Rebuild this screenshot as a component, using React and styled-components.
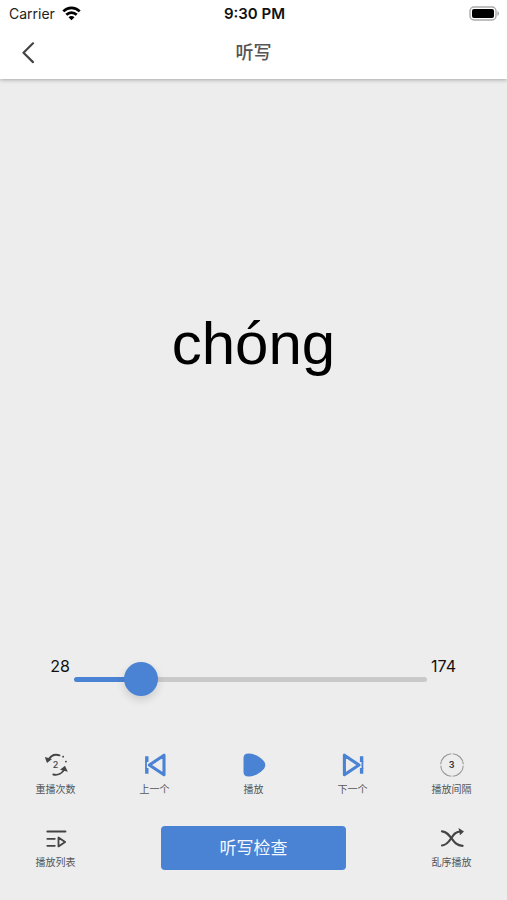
import React, { useState } from "react";
import styled, { createGlobalStyle } from "styled-components";

const GlobalStyle = createGlobalStyle`
*, *::before, *::after {
    box-sizing: border-box;
}
body {
    margin: 0;
    background: #ededed;
    color: #111;
    font-family: Inter, "Noto Sans CJK SC", sans-serif;
}
button {
    font-family: inherit;
    border: none;
    padding: 0;
    cursor: pointer;
}
svg {
    display: block;
}
`;

const Screen = styled.div`
    min-height: 100vh;
    display: flex;
    flex-direction: column;
`

const Header = styled.header`
    background: white;
    box-shadow: 0 1px 4px rgba(0, 0, 0, .3);
`

const StatusBar = styled.div`
    display: grid;
    grid-template-columns: 1fr auto 1fr;
    align-items: center;
    height: 27px;
    padding: 0 7px 0 9px;
    font-size: 14px;
    line-height: 20px;
`

const Carrier = styled.div`
    display: flex;
    align-items: center;
    gap: 7px;
    color: #222;
`

const Clock = styled.div`
    font-size: 15px;
    font-weight: 600;
    color: #111;
`

const Battery = styled.div`
    justify-self: end;
`

const NavBar = styled.nav`
    display: grid;
    grid-template-columns: 56px 1fr 56px;
    align-items: center;
    height: 52px;
`

const BackButton = styled.button`
    display: flex;
    align-items: center;
    justify-content: center;
    height: 52px;
    background: none;
    color: #444;
`

const Title = styled.h1`
    margin: 0;
    text-align: center;
    font-size: 18px;
    line-height: 28px;
    font-weight: 500;
    color: #555;
`

const WordArea = styled.main`
    flex: 1;
    display: flex;
    align-items: center;
    justify-content: center;
    padding-bottom: 48px;
`

const Word = styled.div`
    font-family: "Liberation Sans", Arial, sans-serif;
    font-size: 60px;
    line-height: 72px;
    color: #000;
`

const Progress = styled.div`
    display: grid;
    grid-template-columns: 70px 1fr 76px;
    column-gap: 4px;
    height: 44px;
    margin-bottom: 52px;
`

const Count = styled.label`
    font-size: 16px;
    line-height: 20px;
    text-align: ${props => props.$align};
`

const Range = styled.input`
    appearance: none;
    width: 100%;
    height: 34px;
    margin: 6px 0 0;
    background: none;
    cursor: pointer;

    &::-webkit-slider-runnable-track {
        height: 5px;
        border-radius: 3px;
        background: linear-gradient(to right, #4a83d4 var(--fill), #c9c9c9 var(--fill));
    }
    &::-webkit-slider-thumb {
        appearance: none;
        width: 34px;
        height: 34px;
        margin-top: -15px;
        border-radius: 50%;
        background: #4a83d4;
        box-shadow: 0 4px 8px rgba(0, 0, 0, .14);
    }
`

const Controls = styled.div`
    display: grid;
    grid-template-columns: repeat(5, 1fr);
    row-gap: 28px;
    padding: 0 6px 30px;
`

const Control = styled.button`
    display: flex;
    flex-direction: column;
    align-items: center;
    gap: 3px;
    background: none;
    font-size: 10px;
    line-height: 16px;
    color: #555;

    svg {
        width: 26px;
        height: 26px;
        color: ${props => props.$primary ? "#4a83d4" : "#444"};
    }
`

const CheckCell = styled.div`
    grid-column: span 3;
    display: flex;
    justify-content: center;
    align-items: center;
`

const CheckButton = styled.button`
    width: 62%;
    height: 44px;
    border-radius: 4px;
    background: #4a83d4;
    color: #f4f8ff;
    font-size: 17px;
    line-height: 24px;
`

const WifiIcon = () => (
    <svg width="19" height="15" viewBox="0 0 19 15" fill="none" stroke="#000" strokeWidth="2.7">
        <path d="M1.3 5.4C6 .7 13 .7 17.7 5.4" />
        <path d="M4.3 8.8c3-2.9 7.4-2.9 10.4 0" />
        <path d="M9.500 14.2L6.5 11.2c1.700-1.500 4.300-1.500 6 0z" fill="#000" stroke="none" />
    </svg>
)

const BatteryIcon = () => (
    <svg width="31" height="15" viewBox="0 0 31 15">
        <rect x="1" y="1" width="26" height="13" rx="4" fill="#fff" stroke="#aaa" strokeWidth="1.4" />
        <rect x="3" y="3" width="22" height="9" rx="2" fill="#000" />
        <path d="M28.4 5.2c2.2.6 2.2 4 0 4.6z" fill="#aaa" />
    </svg>
)

const BackIcon = () => (
    <svg width="14" height="22" viewBox="0 0 14 22" fill="none" stroke="currentColor" strokeWidth="2.2" strokeLinecap="round" strokeLinejoin="round">
        <path d="M12 1.3L2.5 10.7 12 20.1" />
    </svg>
)

const RepeatIcon = () => (
    <svg viewBox="0 0 26 26" fill="none" stroke="currentColor" strokeWidth="1.8" strokeLinecap="round">
        <path d="M16.6 3.3C11.8 1.9 7.6 3.8 5.3 8" />
        <path d="M1.8 5l7.200 2-5 4z" fill="currentColor" stroke="none" />
        <path d="M10.3 22.5c4.8 1 9.3-1.1 11-5.3" />
        <path d="M17 17.8l5-4 2.800 6z" fill="currentColor" stroke="none" />
        <path d="M20.1 4.7h.1M22.9 9.6h.1" />
        <text x="12.6" y="16" textAnchor="middle" fontSize="9" fontWeight="500" fill="currentColor" stroke="none">2</text>
    </svg>
)

const PreviousIcon = () => (
    <svg viewBox="0 0 26 26" fill="none" stroke="currentColor" strokeWidth="3.1" strokeLinejoin="round">
        <path d="M22 3.2v19.6L7.4 13z" />
        <path d="M4.800 4.200v5.800M4.800 16v5.800" strokeWidth="3.4" />
        <path d="M4 9v8" strokeWidth="1.8" />
    </svg>
)

const PlayIcon = () => (
    <svg viewBox="0 0 26 26" fill="currentColor">
        <path d="M2.500 6C2.500 2.600 4.500 1.400 8.500 1.600c5 .3 10.500 3.200 14 7.200 2.400 2.800 2.400 5.600 0 8.400-3.500 4-9 6.900-14 7.200-4 .2-6-1-6-4.400z" />
    </svg>
)

const NextIcon = () => (
    <svg viewBox="0 0 26 26" fill="none" stroke="currentColor" strokeWidth="3.1" strokeLinejoin="round">
        <path d="M4.400 3.200v19.600L19 13z" />
        <path d="M21.600 4.200v5.800M21.600 16v5.800" strokeWidth="3.4" />
        <path d="M22.400 9v8" strokeWidth="1.8" />
    </svg>
)

const IntervalIcon = () => (
    <svg viewBox="0 0 26 26" fill="none" stroke="#999" strokeWidth="1.1">
        <circle cx="13" cy="13" r="11.3" pathLength="100" strokeDasharray="23 2" strokeDashoffset="-1" />
        <text x="12.6" y="16" textAnchor="middle" fontSize="9" fontWeight="600" fill="#333" stroke="none">3</text>
    </svg>
)

const ListIcon = () => (
    <svg viewBox="0 0 26 26" fill="none" stroke="currentColor" strokeWidth="1.8" strokeLinecap="round" strokeLinejoin="round">
        <path d="M4.300 6.500h18.200M4.300 13.800h7.500M4.300 20.800h7.500" />
        <path d="M15.500 12.400v9l6.600-4.500z" />
    </svg>
)

const ShuffleIcon = () => (
    <svg viewBox="0 0 26 26" fill="none" stroke="currentColor" strokeWidth="2.2" strokeLinecap="round">
        <path d="M3 6.300c9.500.2 9.500 14.500 20.600 14.500" />
        <path d="M3 20.500c9.500-.8 9-13.800 18-14" />
        <path d="M19.500 3l5.500 3.500-4 3.800z" fill="currentColor" stroke="none" />
    </svg>
)

const TOTAL = 174

const App = () => {
    const [current, setCurrent] = useState(28)

    const move = step => setCurrent(Math.min(TOTAL, Math.max(1, current + step)))
    const fill = `${((current - 1) / (TOTAL - 1)) * 100}%`

    return (
        <Screen>
            <GlobalStyle />
            <Header>
                <StatusBar>
                    <Carrier>Carrier <WifiIcon /></Carrier>
                    <Clock>9:30 PM</Clock>
                    <Battery><BatteryIcon /></Battery>
                </StatusBar>
                <NavBar>
                    <BackButton aria-label="返回"><BackIcon /></BackButton>
                    <Title>听写</Title>
                </NavBar>
            </Header>
            <WordArea>
                <Word>chóng</Word>
            </WordArea>
            <Progress>
                <Count htmlFor="position" $align="right">{current}</Count>
                <Range
                    id="position"
                    type="range"
                    min="1"
                    max={TOTAL}
                    value={current}
                    onChange={e => setCurrent(Number(e.target.value))}
                    style={{ "--fill": fill }}
                />
                <Count htmlFor="position" $align="left">{TOTAL}</Count>
            </Progress>
            <Controls>
                <Control><RepeatIcon />重播次数</Control>
                <Control $primary onClick={() => move(-1)}><PreviousIcon />上一个</Control>
                <Control $primary><PlayIcon />播放</Control>
                <Control $primary onClick={() => move(1)}><NextIcon />下一个</Control>
                <Control><IntervalIcon />播放间隔</Control>
                <Control><ListIcon />播放列表</Control>
                <CheckCell>
                    <CheckButton>听写检查</CheckButton>
                </CheckCell>
                <Control><ShuffleIcon />乱序播放</Control>
            </Controls>
        </Screen>
    )
}

export default App
